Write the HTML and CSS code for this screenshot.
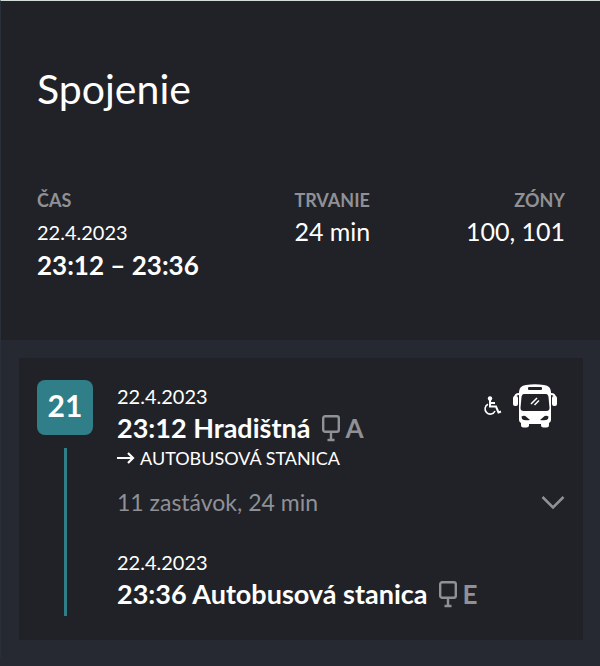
FILE: index.html
```
<!DOCTYPE html>
<html lang="sk">
<head>
    <meta charset="UTF-8">
    <meta name="viewport" content="width=device-width, initial-scale=1.0">
    <title>Spojenie</title>
    <link rel="stylesheet" href="styles.css">
</head>
<body>
    <svg width="0" height="0" class="sprite" aria-hidden="true">
        <symbol id="stop" viewBox="0 0 18 28">
            <rect x="1.200" y="2.200" width="15.600" height="15.600" rx="2" fill="none" stroke="currentColor" stroke-width="2.400"/>
            <path d="M9 18v8M5.500 26h7" fill="none" stroke="currentColor" stroke-width="2.400"/>
        </symbol>
    </svg>

    <header class="summary">
        <h1>Spojenie</h1>
        <dl class="facts">
            <div class="fact">
                <dt>ČAS</dt>
                <dd class="date">22.4.2023</dd>
                <dd class="time">23:12 – 23:36</dd>
            </div>
            <div class="fact">
                <dt>TRVANIE</dt>
                <dd>24 min</dd>
            </div>
            <div class="fact fact-right">
                <dt>ZÓNY</dt>
                <dd>100, 101</dd>
            </div>
        </dl>
    </header>

    <main>
        <article class="leg">
            <div class="line">
                <span class="line-number">21</span>
                <span class="line-track"></span>
            </div>
            <div class="stops">
                <div class="departure">
                    <div>
                        <p class="date">22.4.2023</p>
                        <h2>23:12 Hradištná
                            <span class="platform"><svg width="18" height="28" aria-hidden="true"><use href="#stop"/></svg>A</span>
                        </h2>
                        <p class="direction">
                            <svg width="18" height="12" viewBox="0 0 18 12" aria-hidden="true"><path d="M0 6h16M11 1l5 5-5 5" fill="none" stroke="currentColor" stroke-width="2.200"/></svg>
                            AUTOBUSOVÁ STANICA
                        </p>
                    </div>
                    <div class="vehicle">
                        <svg width="19" height="20" viewBox="0 0 19 20" role="img" aria-label="Bezbariérové vozidlo">
                            <circle cx="7" cy="2.500" r="2.200" fill="currentColor"/>
                            <path d="M7 4v6.500h6l2.500 6 2.500-1M7 7h5" fill="none" stroke="currentColor" stroke-width="2"/>
                            <path d="M5 8.200a5.200 5.200 0 1 0 7 6.800" fill="none" stroke="currentColor" stroke-width="1.600"/>
                        </svg>
                        <svg width="44" height="44" viewBox="0 0 44 44" role="img" aria-label="Autobus">
                            <path d="M6 8Q6 2 13 1Q22-.5 31 1Q38 2 38 8V36Q38 38 36 39V41Q36 43.500 33.500 43.500H30.500Q28 43.500 28 41V40H16V41Q16 43.500 13.500 43.500H10.500Q8 43.500 8 41V39Q6 38 6 36Z" fill="currentColor"/>
                            <path d="M6 10Q2 10 2 14M38 10Q42 10 42 14" fill="none" stroke="currentColor" stroke-width="2"/>
                            <rect x="0" y="12" width="5" height="10" rx="2" fill="currentColor"/>
                            <rect x="39" y="12" width="5" height="10" rx="2" fill="currentColor"/>
                            <g class="bus-cut">
                                <rect x="15" y="3" width="14" height="3" rx="1"/>
                                <path d="M11 10h22q2 0 2.500 3l1 11q0 3-3 3H10.500q-3 0-3-3l1-11q.5-3 2.500-3z"/>
                                <path d="M8.500 32.500q3-1.500 5 .5l3.500 3q-6 1-8-1zM35.500 32.500q-3-1.500-5 .5l-3.500 3q6 1 8-1z"/>
                            </g>
                            <path d="M18 20l6-6M21.500 21l4.500-4.500" fill="none" stroke="currentColor" stroke-width="1.500"/>
                        </svg>
                    </div>
                </div>
                <button type="button" class="toggle" aria-expanded="false">
                    <span>11 zastávok, 24 min</span>
                    <svg width="24" height="16" viewBox="0 0 24 16" aria-hidden="true"><path d="M1.500 3L12 13.500 22.500 3" fill="none" stroke="currentColor" stroke-width="2.500"/></svg>
                </button>
                <p class="date">22.4.2023</p>
                <h2>23:36 Autobusová stanica
                    <span class="platform"><svg width="18" height="28" aria-hidden="true"><use href="#stop"/></svg>E</span>
                </h2>
            </div>
        </article>
    </main>
</body>
</html>
```
FILE: styles.css
```
:root {
    --panel: #212227;
    --background: #262932;
    --accent: #307f88;
    --muted: #909196;
}

* {
    margin: 0;
    padding: 0;
    box-sizing: border-box;
}

body {
    background-color: var(--background);
    color: white;
    font-family: Lato, sans-serif;
    border-top: 1px solid #d3ddd8;
    border-left: 1px solid #2a303a;
}

svg {
    display: block;
    flex-shrink: 0;
}

.sprite {
    position: absolute;
}

.summary {
    background-color: var(--panel);
    padding: 60px 35px 60px 36px;
}

h1 {
    font-size: 41px;
    line-height: 56px;
    font-weight: 400;
    margin-bottom: 69px;
}

.facts {
    display: flex;
    justify-content: space-between;
}

.fact dt {
    color: var(--muted);
    font-size: 18px;
    line-height: 28px;
    font-weight: 700;
}

.fact dd {
    font-size: 25px;
    line-height: 34px;
}

.fact-right {
    text-align: right;
}

.date,
.fact .date {
    font-size: 20px;
    line-height: 36px;
}

.fact .time {
    font-size: 26px;
    line-height: 30px;
    font-weight: 700;
}

.leg {
    display: flex;
    gap: 24px;
    margin: 18px 17px 18px 18px;
    padding: 20px 18px 24px;
    background-color: var(--panel);
}

.line {
    display: flex;
    flex-direction: column;
    align-items: center;
    gap: 13px;
    padding-top: 2px;
}

.line-number {
    width: 56px;
    padding-bottom: 5px;
    border-radius: 8px;
    background-color: var(--accent);
    font-size: 30px;
    line-height: 50px;
    font-weight: 700;
    text-align: center;
}

.line-track {
    flex: 1;
    width: 3px;
    background-color: var(--accent);
}

.stops {
    flex: 1;
    min-width: 0;
    padding-bottom: 8px;
}

.departure {
    display: flex;
    justify-content: space-between;
}

h2 {
    display: flex;
    align-items: center;
    gap: 12px;
    font-size: 27px;
    line-height: 28px;
    font-weight: 700;
}

.platform {
    display: flex;
    gap: 5px;
    color: var(--muted);
    font-size: 26px;
}

.direction {
    display: flex;
    align-items: center;
    gap: 5px;
    font-size: 18px;
    line-height: 32px;
}

.vehicle {
    display: flex;
    align-items: center;
    align-self: flex-start;
    gap: 11px;
    padding: 6px 8px 0 0;
}

.bus-cut {
    fill: var(--panel);
}

.toggle {
    display: flex;
    align-items: center;
    justify-content: space-between;
    width: 100%;
    margin: 12px 0 26px;
    border: none;
    background: none;
    color: var(--muted);
    font-family: inherit;
    font-size: 23px;
    line-height: 32px;
    cursor: pointer;
}
```
